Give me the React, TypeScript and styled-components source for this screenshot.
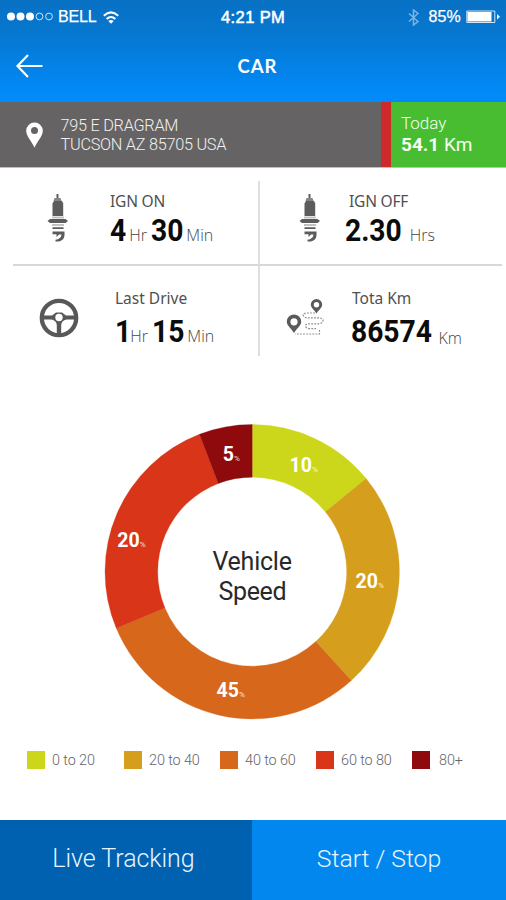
import React from "react";
import styled, { createGlobalStyle } from "styled-components";

const GlobalStyle = createGlobalStyle`
  *, *::before, *::after { box-sizing: border-box; }
  body { margin: 0; background: #fff; font-family: Roboto, "Open Sans", sans-serif; }
`;

const Screen = styled.main`
  width: 506px;
  height: 900px;
  display: flex;
  flex-direction: column;
  overflow: hidden;
  background: #fff;
`;

const Header = styled.header`
  height: 102px;
  flex: none;
  background: linear-gradient(180deg, #0871c4 0%, #0676cd 28%, #0480e3 60%, #028af8 92%, #028af8 100%);
  color: #fff;
`;

const StatusBar = styled.div`
  display: grid;
  grid-template-columns: 1fr 66px 1fr;
  align-items: center;
  height: 34px;
  padding: 0 5px 0 7px;
  font: 400 16px/34px "Liberation Sans", Arial, sans-serif;
`;

const StatusGroup = styled.div<{ $end?: boolean }>`
  display: flex;
  align-items: center;
  justify-content: ${(p) => (p.$end ? "flex-end" : "flex-start")};
`;

const StatusText = styled.span<{ $size?: number; $spacing?: number; $bold?: boolean }>`
  font-size: ${(p) => p.$size ?? 16}px;
  letter-spacing: ${(p) => p.$spacing ?? 0}px;
  -webkit-text-stroke: ${(p) => (p.$bold ? 0.55 : 0.25)}px currentColor;
  white-space: nowrap;
`;

const SignalIcon = styled.svg`
  width: 47px;
  height: 10px;
  margin-right: 4px;
`;

const WifiIcon = styled.svg`
  width: 16px;
  height: 13px;
  margin-left: 7px;
`;

const BluetoothIcon = styled.svg`
  width: 11px;
  height: 17px;
  margin-right: 9px;
  opacity: 0.55;
`;

const BatteryIcon = styled.svg`
  width: 35px;
  height: 14px;
  margin-left: 5px;
`;

const NavBar = styled.div`
  display: grid;
  grid-template-columns: 80px 1fr 80px;
  align-items: center;
  height: 64px;
`;

const BackButton = styled.button`
  display: flex;
  padding: 0 0 0 15px;
  border: 0;
  background: none;
`;

const Title = styled.h1`
  margin: 0 0 0 9px;
  text-align: center;
  font: 700 18.5px/24px Lato, sans-serif;
  letter-spacing: 1px;
`;

const InfoStrip = styled.section`
  display: flex;
  flex: none;
  height: 66px;
  border-bottom: 1px solid #77767477;
`;

const Address = styled.div`
  flex: 1;
  display: flex;
  align-items: center;
  padding: 0 0 0 25px;
  background: #656364;
  color: #f1f0f0;
`;

const AddressText = styled.address`
  margin-left: 16.5px;
  font: 350 16.3px/19px Roboto, sans-serif;
  letter-spacing: -0.27px;
`;

const Today = styled.div`
  width: 125px;
  padding: 10px 0 0 10px;
  border-left: 10px solid #cf2a2b;
  background: #49bd32;
  color: #f5fff2;
  font: 400 19px/22px Roboto, sans-serif;
`;

const TodayLabel = styled.div`
  font-size: 17px;
  font-weight: 300;
  line-height: 22px;
`;

const Stats = styled.section`
  display: grid;
  flex: none;
  grid-template-columns: 245px 244px;
  grid-template-rows: 83px 92px;
  margin: 13px 0 0 13px;
`;

const Stat = styled.article<{ $right?: boolean; $bottom?: boolean }>`
  display: flex;
  border-left: ${(p) => (p.$right ? "2px solid #dedede" : "0")};
  border-top: ${(p) => (p.$bottom ? "2px solid #d8d8d8" : "0")};
`;

const StatIcon = styled.div<{ $width: number; $top: number; $left: number }>`
  flex: none;
  width: ${(p) => p.$width}px;
  padding: ${(p) => p.$top}px 0 0 ${(p) => p.$left}px;
`;

const StatLabel = styled.div<{ $top: number; $indent?: number; $spacing?: number }>`
  margin: ${(p) => p.$top}px 0 0 ${(p) => p.$indent ?? 0}px;
  font: 380 15.5px/18px "Noto Sans", "Open Sans", sans-serif;
  letter-spacing: ${(p) => p.$spacing ?? 0}px;
  color: #505050;
  white-space: nowrap;
`;

const StatValue = styled.div<{ $top: number }>`
  display: flex;
  align-items: baseline;
  margin-top: ${(p) => p.$top}px;
  line-height: 28px;
  white-space: nowrap;
`;

/* Condensed bold figures; $trim takes back the width freed by the narrowing. */
const Amount = styled.strong<{ $trim: number }>`
  margin-right: -${(p) => p.$trim}px;
  transform: scaleX(0.91);
  transform-origin: 0 50%;
  font: 700 31px/28px Roboto, sans-serif;
  color: #0b0b0b;
`;

const Unit = styled.span<{ $before?: number; $after?: number; $drop?: number }>`
  margin: 0 ${(p) => p.$after ?? 0}px 0 ${(p) => p.$before ?? 0}px;
  transform: translateY(${(p) => p.$drop ?? 0}px);
  font: 300 16px/18px "Open Sans", sans-serif;
  color: #444;
`;

const ChartArea = styled.section`
  display: flex;
  flex: none;
  justify-content: center;
  height: 300px;
  margin: 66px 2px 0 0;
`;

const Chart = styled.svg`
  width: 300px;
  height: 300px;
  font-family: Roboto, sans-serif;
`;

const Legend = styled.ul`
  display: grid;
  flex: none;
  grid-template-columns: 97px 96px 96px 96px 70px;
  margin: 29px 0 0 27px;
  padding: 0;
  list-style: none;
`;

const LegendItem = styled.li<{ $gap: number }>`
  display: flex;
  align-items: center;
  gap: ${(p) => p.$gap}px;
  height: 18px;
  font: 300 14.4px/18px Roboto, sans-serif;
  letter-spacing: -0.1px;
  color: #666;
  white-space: nowrap;
`;

const Swatch = styled.span<{ $color: string }>`
  width: 18px;
  height: 18px;
  background: ${(p) => p.$color};
`;

const LegendText = styled.span`
  padding-top: 1px;
`;

const Actions = styled.footer`
  display: grid;
  flex: none;
  grid-template-columns: 252px 1fr;
  height: 80px;
  margin-top: auto;
`;

const Action = styled.button<{ $dark?: boolean }>`
  padding: ${(p) => (p.$dark ? "0 5px 2px 0" : "0 0 2px 0")};
  border: 0;
  background: ${(p) => (p.$dark ? "#0061b0" : "#0287ee")};
  color: #e6f5ff;
  font: 350 ${(p) => (p.$dark ? 25 : 24.8)}px/30px Roboto, sans-serif;
  letter-spacing: -0.05px;
`;

const SparkPlug = () => (
  <svg width="22" height="50" viewBox="0 0 22 50" fill="#5c5c5c">
    <path d="M9.500 0h2v4h-2z" />
    <path d="M7.500 4h6l1 3h-8z" fill="#858585" />
    <path d="M7 7h8l1.200 2.500v12.500h-10.700v-12.500z" />
    <path d="M5 22.500h12v2h-12z" fill="#c2c2c2" />
    <path d="M3 25h15.500l2.500 2-2.500 2h-15.500l-2.500-2z" />
    <path d="M5 30h12v2h-12z" fill="#c2c2c2" />
    <path d="M5.500 33.200h11v1.800h-11zM5.500 37.500h12v3.500q0 5-5.500 6.500h-3.500v-1.700q5.500-.8 6-5.300h-2.500l-2.500 2.500v-2.700h-4z" />
  </svg>
);

const SteeringWheel = () => (
  <svg width="40" height="40" viewBox="0 0 40 40" fill="none">
    <circle cx="20" cy="20" r="17.200" stroke="#585858" strokeWidth="4.300" />
    <path d="M4.500 17.500h8.500l4-3h6l4 3h8.500v4h-8q-5 1-5.300 5.500v8.500h-4.400v-8.500q-.3-4.500-5.300-5.500h-8z" fill="#585858" />
    <circle cx="20" cy="19.500" r="3.700" fill="#fff" />
  </svg>
);

const RouteIcon = () => (
  <svg width="38" height="38" viewBox="0 0 38 38">
    <path
      d="M29 14H20q-4 1-2.500 3t4 1.900H34q3.500 1 3 3t-4 3H21q-2.500 1.500-1 3.200t4 1.500h6M33.500 31v4H9"
      fill="none"
      stroke="#8d8d8d"
      strokeWidth="1.200"
      strokeDasharray="1.800 1.300"
    />
    <path
      fillRule="evenodd"
      fill="#5a5a5a"
      d="M8 15.500a7.200 7.200 0 0 1 7.200 7.200c0 4-5.200 7.500-7.200 11.300-2-3.800-7.200-7.300-7.200-11.300a7.200 7.200 0 0 1 7.200-7.200zm0 3.700a3.600 3.600 0 1 0 0 7.200 3.600 3.600 0 0 0 0-7.200zM30.500 0a5.700 5.700 0 0 1 5.700 5.700c0 3-4.200 5.800-5.700 8.800-1.500-3-5.700-5.800-5.700-8.800a5.700 5.700 0 0 1 5.700-5.700zm0 3a2.700 2.700 0 1 0 0 5.400 2.700 2.700 0 0 0 0-5.400z"
    />
  </svg>
);

const PinIcon = () => (
  <svg width="19" height="26" viewBox="0 0 19 26">
    <path
      fill="#fff"
      fillRule="evenodd"
      d="M9.500.5a8.300 8.300 0 0 1 8.300 8.300c0 5.500-5.300 10.200-8.300 17-3-6.800-8.300-11.500-8.300-17A8.300 8.300 0 0 1 9.500.5zm0 4.500a3.500 3.500 0 1 0 0 7 3.500 3.500 0 0 0 0-7z"
    />
  </svg>
);

interface Segment {
  range: string;
  percent: number;
  color: string;
  from: number;
  to: number;
  x: number;
  y: number;
}

const segments: Segment[] = [
  { range: "0 to 20", percent: 10, color: "#ccd71b", from: 0, to: 50.7, x: 187.5, y: 49.5 },
  { range: "20 to 40", percent: 20, color: "#d59f1d", from: 50.7, to: 137.7, x: 253.5, y: 166 },
  { range: "40 to 60", percent: 45, color: "#d7671b", from: 137.7, to: 247.4, x: 114.5, y: 274.5 },
  { range: "60 to 80", percent: 20, color: "#d83519", from: 247.4, to: 339, x: 15.3, y: 124.5 },
  { range: "80+", percent: 5, color: "#8f0a0d", from: 339, to: 360, x: 120.8, y: 39 },
];

const polar = (r: number, deg: number) => {
  const a = (deg * Math.PI) / 180;
  return `${(150.2 + r * Math.sin(a)).toFixed(2)} ${(149.7 - r * Math.cos(a)).toFixed(2)}`;
};

const arc = (from: number, to: number) =>
  `M${polar(147.2, from)}A147.2 147.2 0 0 1 ${polar(147.2, to)}L${polar(94.5, to)}A94.5 94.5 0 0 0 ${polar(94.5, from)}Z`;

const SpeedChart = () => (
  <Chart viewBox="0 0 300 300" role="img" aria-label="Vehicle Speed">
    {segments.map((s) => (
      <path key={s.range} d={arc(s.from, s.to)} fill={s.color} stroke={s.color} strokeWidth="0.3" />
    ))}
    {segments.map((s) => (
      <text key={s.range} x={s.x} y={s.y} fill="#fff" fontSize="19.500" fontWeight="700">
        {s.percent}
        <tspan fontSize="8" fontWeight="400" fillOpacity="0.85">%</tspan>
      </text>
    ))}
    <g fontSize="25" fill="#292929" textAnchor="middle">
      <text x="150.2" y="148" textLength="79.500">Vehicle</text>
      <text x="150.5" y="178" textLength="68">Speed</text>
    </g>
  </Chart>
);

export default function App() {
  return (
    <Screen>
      <GlobalStyle />
      <Header>
        <StatusBar>
          <StatusGroup>
            <SignalIcon viewBox="0 0 47 10">
              {[4, 13.500, 23].map((x) => <circle key={x} cx={x} cy="4.500" r="4" fill="#fff" />)}
              {[32.500, 42].map((x) => <circle key={x} cx={x} cy="4.500" r="3.400" fill="none" stroke="#c9e2f6" />)}
            </SignalIcon>
            <StatusText $spacing={-0.2}>BELL</StatusText>
            <WifiIcon viewBox="0 0 16 13" fill="none" stroke="#fff" strokeWidth="2">
              <path d="M.8 4.800q7.200-6.800 14.400 0M3.600 8q4.400-4 8.800 0" />
              <path d="M8 12.700L5.300 10q2.700-2.200 5.400 0z" fill="#fff" stroke="none" />
            </WifiIcon>
          </StatusGroup>
          <StatusText $bold $size={16.5} $spacing={0.4}>4:21 PM</StatusText>
          <StatusGroup $end>
            <BluetoothIcon viewBox="0 0 11 17" fill="none" stroke="#d9ecfb" strokeWidth="1.500">
              <path d="M1 4.500l9 8-4.500 3.500V1L10 4.500l-9 8" />
            </BluetoothIcon>
            <StatusText $spacing={0.2}>85%</StatusText>
            <BatteryIcon viewBox="0 0 35 14">
              <path d="M.8 1h28v11.500h-28z" fill="none" stroke="#cfe6f8" />
              <path d="M1.500 2h24v9.500h-24z" fill="#fff" />
              <path d="M31 4l3 2.800-3 2.800z" fill="#fff" />
            </BatteryIcon>
          </StatusGroup>
        </StatusBar>
        <NavBar>
          <BackButton aria-label="Back">
            <svg width="28" height="24" viewBox="0 0 28 24" fill="none" stroke="#fff" strokeWidth="2.200">
              <path d="M27.500 12H2.500M13 1L2.500 12L13 23" />
            </svg>
          </BackButton>
          <Title>CAR</Title>
        </NavBar>
      </Header>

      <InfoStrip>
        <Address>
          <PinIcon />
          <AddressText>795 E DRAGRAM<br />TUCSON AZ 85705 USA</AddressText>
        </Address>
        <Today>
          <TodayLabel>Today</TodayLabel>
          <strong>54.1</strong> Km
        </Today>
      </InfoStrip>

      <Stats>
        <Stat>
          <StatIcon $width={97} $top={13} $left={34}><SparkPlug /></StatIcon>
          <div>
            <StatLabel $top={11} $spacing={-0.2}>IGN ON</StatLabel>
            <StatValue $top={7}>
              <Amount $trim={1.6}>4</Amount><Unit $before={3} $after={4}>Hr</Unit><Amount $trim={3.2}>30</Amount><Unit $before={3}>Min</Unit>
            </StatValue>
          </div>
        </Stat>
        <Stat $right>
          <StatIcon $width={85} $top={13} $left={39}><SparkPlug /></StatIcon>
          <div>
            <StatLabel $top={11} $indent={4} $spacing={-0.2}>IGN OFF</StatLabel>
            <StatValue $top={7}><Amount $trim={5.6}>2.30</Amount><Unit $before={8}>Hrs</Unit></StatValue>
          </div>
        </Stat>
        <Stat $bottom>
          <StatIcon $width={102} $top={32} $left={26}><SteeringWheel /></StatIcon>
          <div>
            <StatLabel $top={23}>Last Drive</StatLabel>
            <StatValue $top={11}>
              <Amount $trim={1.6}>1</Amount><Unit $before={-1} $after={4}>Hr</Unit><Amount $trim={3.2}>15</Amount><Unit $before={3}>Min</Unit>
            </StatValue>
          </div>
        </Stat>
        <Stat $right $bottom>
          <StatIcon $width={91} $top={33} $left={26}><RouteIcon /></StatIcon>
          <div>
            <StatLabel $top={23} $indent={1}>Tota Km</StatLabel>
            <StatValue $top={11}><Amount $trim={7.9}>86574</Amount><Unit $before={6.5} $drop={2}>Km</Unit></StatValue>
          </div>
        </Stat>
      </Stats>

      <ChartArea><SpeedChart /></ChartArea>

      <Legend>
        {segments.map((s) => (
          <LegendItem key={s.range} $gap={s.range === "80+" ? 9 : 7}>
            <Swatch $color={s.color} /><LegendText>{s.range}</LegendText>
          </LegendItem>
        ))}
      </Legend>

      <Actions>
        <Action $dark>Live Tracking</Action>
        <Action>Start / Stop</Action>
      </Actions>
    </Screen>
  );
}
